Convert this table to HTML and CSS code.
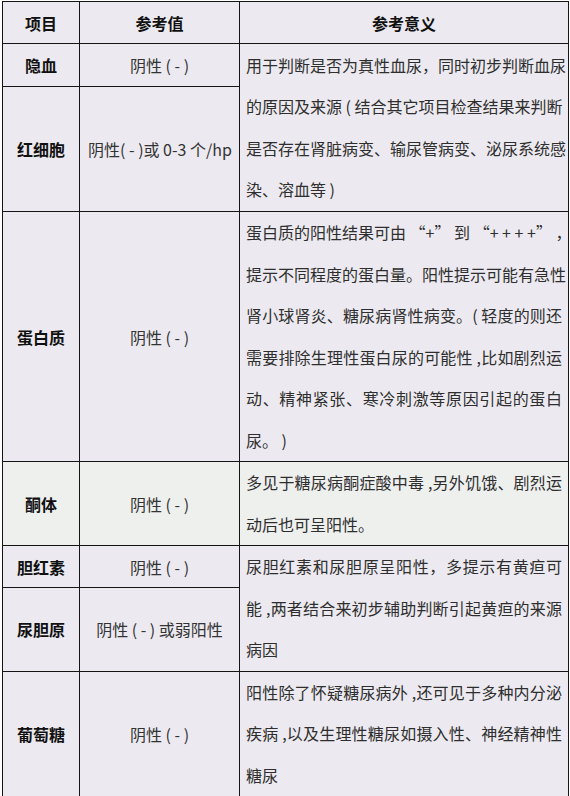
FILE: index.html
```html
<!DOCTYPE html>
<html lang="zh-CN">
<head>
<meta charset="utf-8">
<title>尿常规参考值</title>
<link rel="stylesheet" href="styles.css">
</head>
<body>
<table class="ref">
  <colgroup>
    <col class="c-item">
    <col class="c-val">
    <col class="c-mean">
  </colgroup>
  <thead>
    <tr class="h-head">
      <th>项目</th>
      <th>参考值</th>
      <th>参考意义</th>
    </tr>
  </thead>
  <tbody>
    <tr class="h-43">
      <th class="item">隐血</th>
      <td class="val">阴性 ( - )</td>
      <td class="mean" rowspan="2">
        <span class="ln">用于判断是否为真性血尿，同时初步判断血尿</span>
        <span class="ln">的原因及来源 ( 结合其它项目检查结果来判断</span>
        <span class="ln">是否存在肾脏病变、输尿管病变、泌尿系统感</span>
        <span class="ln end">染、溶血等 )</span>
      </td>
    </tr>
    <tr class="h-125">
      <th class="item">红细胞</th>
      <td class="val nowrap">阴性( - )或 0-3 个/hp</td>
    </tr>
    <tr class="h-250">
      <th class="item">蛋白质</th>
      <td class="val">阴性 ( - )</td>
      <td class="mean">
        <span class="ln">蛋白质的阳性结果可由 “+” 到 “+ + + +” ，</span>
        <span class="ln">提示不同程度的蛋白量。阳性提示可能有急性</span>
        <span class="ln">肾小球肾炎、糖尿病肾性病变。( 轻度的则还</span>
        <span class="ln">需要排除生理性蛋白尿的可能性 ,比如剧烈运</span>
        <span class="ln">动、精神紧张、寒冷刺激等原因引起的蛋白</span>
        <span class="ln end">尿。 )</span>
      </td>
    </tr>
    <tr class="h-84 tint">
      <th class="item">酮体</th>
      <td class="val">阴性 ( - )</td>
      <td class="mean">
        <span class="ln">多见于糖尿病酮症酸中毒 ,另外饥饿、剧烈运</span>
        <span class="ln end">动后也可呈阳性。</span>
      </td>
    </tr>
    <tr class="h-42">
      <th class="item">胆红素</th>
      <td class="val">阴性 ( - )</td>
      <td class="mean" rowspan="2">
        <span class="ln">尿胆红素和尿胆原呈阳性，多提示有黄疸可</span>
        <span class="ln">能 ,两者结合来初步辅助判断引起黄疸的来源</span>
        <span class="ln end">病因</span>
      </td>
    </tr>
    <tr class="h-83">
      <th class="item">尿胆原</th>
      <td class="val">阴性 ( - ) 或弱阳性</td>
    </tr>
    <tr class="h-125">
      <th class="item">葡萄糖</th>
      <td class="val">阴性 ( - )</td>
      <td class="mean">
        <span class="ln">阳性除了怀疑糖尿病外 ,还可见于多种内分泌</span>
        <span class="ln">疾病 ,以及生理性糖尿如摄入性、神经精神性</span>
        <span class="ln end">糖尿</span>
      </td>
    </tr>
  </tbody>
</table>
</body>
</html>
```

FILE: styles.css
```css
html, body {
  margin: 0;
  padding: 0;
  background: #ffffff;
}

body {
  padding: 1px 2px 0 2px;
  font-family: "Noto Sans CJK SC", "Noto Sans", sans-serif;
  color: #2a2a2a;
}

.ref {
  border-collapse: collapse;
  table-layout: fixed;
  width: 566px;
  background: #eceaf0;
  font-size: 16px;
}

.c-item { width: 77px; }
.c-val { width: 160px; }
.c-mean { width: 329px; }

.ref th,
.ref td {
  border: 1px solid #151515;
  padding: 0;
  vertical-align: middle;
}

.ref thead th {
  font-weight: 700;
  text-align: center;
  color: #111;
  line-height: 20px;
}

.item {
  font-weight: 700;
  text-align: center;
  color: #111;
}

.val {
  text-align: center;
  color: #333;
}

.nowrap {
  white-space: nowrap;
  text-align: left;
  padding-left: 8px !important;
}

.mean {
  padding: 0 6px 0 6px !important;
  color: #2e2e2e;
  line-height: 41.5px;
}

.ln {
  display: block;
  text-align: justify;
  text-align-last: justify;
  white-space: nowrap;
}

.ln.end {
  text-align: left;
  text-align-last: left;
}

.tint th,
.tint td {
  background: #eef0ee;
}

.h-head { height: 42px; }
.h-42 { height: 42px; }
.h-43 { height: 43px; }
.h-83 { height: 83px; }
.h-84 { height: 84px; }
.h-125 { height: 125px; }
.h-250 { height: 250px; }
```
